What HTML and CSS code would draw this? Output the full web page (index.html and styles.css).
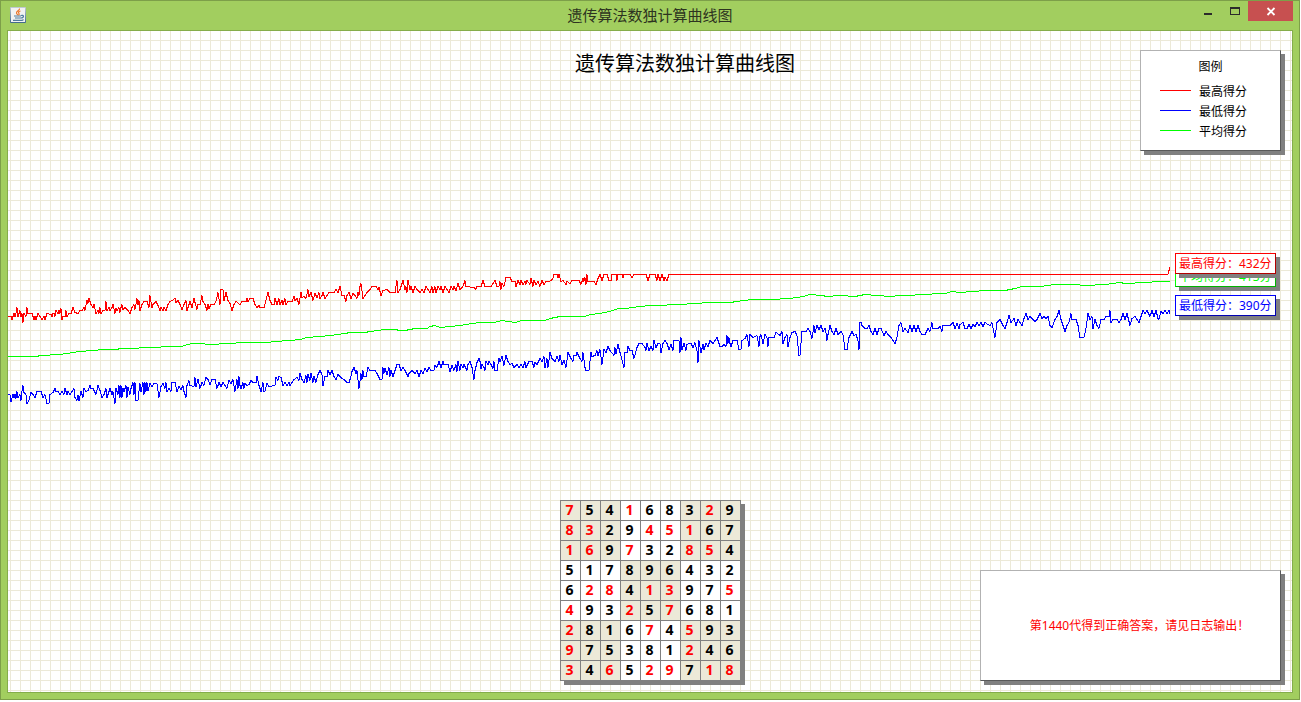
FILE: index.html
```html
<!DOCTYPE html>
<html lang="zh-CN">
<head>
<meta charset="utf-8">
<title>遗传算法数独计算曲线图</title>
<link rel="stylesheet" href="styles.css">
</head>
<body>
<div class="window">
  <header class="titlebar">
    <svg class="app-icon" viewBox="0 0 16 16" aria-hidden="true">
      <defs><linearGradient id="tile" x1="0" y1="0" x2="0" y2="1"><stop offset="0" stop-color="#c3ccd6"/><stop offset="1" stop-color="#3f688b"/></linearGradient></defs>
      <rect width="16" height="16" rx="1" fill="url(#tile)"/>
      <rect x="1" y="1" width="14" height="14" fill="#f2f2f1"/>
      <path d="M9.5 1.5C10 3.500 6 4 6.500 6C6.700 7 7.500 7.200 7.800 8.200M10.500 4C8.500 4.500 8 5.500 9 6.500C9.500 7.200 9 7.800 8.500 8.200" fill="none" stroke="#ec7427" stroke-width="1.200"/>
      <path d="M4 9H11M5 11H11M11 8.500C14 7.500 14.500 10.500 11 11M3 13.300H12.500M12.500 13.200L13.500 12.500" fill="none" stroke="#4f7c9d" stroke-width="1.200"/>
    </svg>
    <h1 class="window-title">遗传算法数独计算曲线图</h1>
    <div class="controls">
      <button class="control" type="button" aria-label="最小化"><svg class="glyph" viewBox="0 0 10 10"><path d="M1 7H9V9H1Z" fill="#2b2b2b"/></svg></button>
      <button class="control" type="button" aria-label="最大化"><svg class="glyph" viewBox="0 0 10 10"><path d="M0 1H10V9H0ZM1 3V8H9V3Z" fill="#2b2b2b" fill-rule="evenodd"/></svg></button>
      <button class="control control-close" type="button" aria-label="关闭"><svg class="glyph" viewBox="0 0 10 10"><path d="M1.500 2L8.500 9M8.500 2L1.500 9" stroke="#fff" stroke-width="1.800"/></svg></button>
    </div>
  </header>
  <main class="chart">
    <svg class="curves" viewBox="8 30.500 1284 661" preserveAspectRatio="none" role="img" aria-label="得分曲线">
      <polyline class="curve low" points="8,394 10,394 11,401 13,394 14,397 15,394 16,398 17,391 18,397 20,394 21,400 22,391 23,385 24,392 26,394 27,403 29,400 31,392 33,394 35,397 37,391 41,391 43,397 45,394 47,403 49,403 50,394 53,392 55,388 56,391 58,391 60,394 62,391 64,394 65,388 67,394 68,391 70,394 72,391 74,388 75,397 77,400 78,395 79,400 81,391 83,397 84,388 86,391 88,390 90,385 91,388 93,388 96,394 98,385 100,390 102,397 104,394 106,388 107,397 109,391 110,388 112,394 113,391 115,403 116,388 118,394 119,385 120,397 121,385 122,397 123,388 124,391 126,385 127,397 128,387 130,394 131,388 133,382 134,394 135,382 136,400 138,400 139,391 140,383 141,391 143,382 144,394 145,382 146,391 147,382 148,390 150,383 152,386 154,383 157,383 159,397 161,386 163,383 165,388 166,382 167,391 169,388 171,391 172,382 175,382 177,391 179,386 181,389 183,385 184,391 186,397 187,385 189,380 190,385 194,386 195,377 196,386 198,379 200,388 202,382 204,385 206,377 208,379 210,384 212,379 215,379 217,388 219,382 221,386 223,382 225,385 227,388 229,380 231,383 233,379 235,391 237,379 238,388 239,376 240,385
241,388 243,382 244,388 245,383 247,385 249,384 251,380 253,382 256,382 257,376 259,385 261,391 263,382 264,391 265,391 267,383 269,386 275,385 276,377 278,380 279,376 281,377 283,385 285,382 287,385 289,382 290,385 292,382 294,379 297,377 299,380 300,373 302,379 304,382 306,375 307,382 308,374 310,380 311,373 313,382 314,376 316,382 318,374 320,370 322,374 323,385 325,376 327,376 328,370 330,374 332,370 334,376 336,379 338,374 341,377 345,380 347,382 349,382 351,376 352,371 354,367 356,373 357,370 359,388 361,373 362,379 363,370 364,376 366,376 368,367 370,370 375,370 377,373 380,379 382,379 383,367 384,373 385,368 387,374 389,367 390,376 391,370 393,376 395,370 397,364 399,364 401,370 403,367 405,370 408,376 409,373 412,370 415,373 417,370 419,376 421,370 423,373 425,368 427,371 429,367 431,370 434,370 435,365 437,367 439,361 441,367 443,361 444,364 448,364 450,371 452,365 454,370 456,364 457,371 458,361 460,370 461,364 463,367 464,364 467,370 468,364 470,361 472,367 474,379 475,370 477,362 479,358
480,361 481,368 482,364 484,367 485,370 486,361 488,364 489,361 491,364 493,368 494,361 495,370 497,370 499,358 500,361 502,356 504,365 506,355 508,361 510,364 512,363 514,367 517,364 519,367 521,364 523,367 525,361 526,367 529,361 532,361 534,367 535,362 537,364 540,358 542,361 544,356 545,367 547,358 548,367 550,352 552,358 555,361 557,356 559,361 560,355 562,364 564,360 566,367 568,352 571,358 573,361 574,355 576,355 577,352 580,358 582,361 583,352 585,367 586,370 589,370 591,352 592,356 595,355 597,350 598,355 600,349 602,364 604,349 606,352 608,346 610,350 614,355 615,347 616,353 618,344 620,352 624,367 625,352 627,352 628,346 630,350 632,350 634,358 637,347 639,343 642,343 645,347 646,350 647,343 649,350 651,346 653,350 654,340 656,347 658,343 660,343 661,352 663,343 665,340 667,343 669,349 671,344 673,350 674,340 679,340 680,352 681,337 682,349 684,343 686,350 687,344 689,343 691,343 693,347 695,342 697,350 698,362 699,340 701,352 703,344 704,349 706,343 708,346 710,340 713,343 715,340 717,337 719,343
720,346 722,346 724,344 726,346 727,335 728,343 729,337 730,343 731,346 733,340 737,340 739,349 741,349 742,340 745,338 747,334 749,346 750,334 753,337 757,335 759,346 760,336 761,334 763,343 765,334 767,337 768,346 769,337 774,337 776,332 780,335 782,331 783,343 785,337 787,334 788,346 790,337 792,332 795,331 797,335 799,355 800,355 801,343 802,331 806,331 808,328 810,331 812,338 814,325 815,332 817,325 819,329 821,325 823,331 825,328 826,332 827,340 828,334 830,325 832,331 834,334 836,328 838,334 841,331 843,334 845,349 847,349 849,337 852,331 854,335 856,334 858,340 859,349 860,322 861,322 862,325 865,328 867,328 869,325 871,331 873,334 875,328 877,334 879,328 881,328 884,335 886,331 888,334 891,337 893,340 895,343 897,337 899,325 901,322 903,331 905,328 908,332 910,325 912,331 914,325 916,331 918,325 920,331 922,334 925,334 928,328 930,331 932,322 933,328 938,328 940,326 942,331 943,325 950,325 953,322 955,328 957,323 959,328
960,324 963,322 965,328 967,328 969,324 971,328 973,324 975,326 977,322 979,325 981,322 983,326 985,322 988,324 990,325 992,322 995,337 997,322 1000,319 1003,325 1005,328 1007,322 1009,315 1011,322 1014,318 1016,325 1018,319 1020,322 1022,325 1024,318 1026,313 1028,319 1030,316 1032,318 1035,321 1037,319 1040,313 1042,318 1044,316 1046,318 1048,316 1050,325 1052,327 1055,319 1057,316 1059,310 1061,319 1063,325 1065,331 1067,325 1069,322 1071,313 1072,319 1076,319 1078,325 1080,337 1084,337 1086,328 1088,313 1090,319 1092,316 1093,328 1095,319 1097,325 1099,328 1101,319 1104,319 1106,316 1109,316 1110,310 1111,322 1113,319 1117,319 1119,322 1121,319 1123,313 1125,319 1127,313 1129,321 1130,325 1132,318 1135,316 1137,319 1139,322 1141,316 1143,310 1145,313 1147,310 1150,316 1152,310 1154,316 1156,310 1158,318 1159,319 1161,311 1163,313 1165,310 1167,313 1169,310 1170,313"/>
      <polyline class="curve mean" points="8,356 37,356 40,355 60,354 67,353 73,352 80,351 93,350 103,349 117,349 120,348 135,348 143,347 160,347 162,346 182,346 187,344 193,343 203,343 207,344 218,344 220,343 233,343 240,342 268,342 275,341 290,340 300,339 307,337 320,336 330,335 345,333 350,332 365,332 370,331 385,329 395,329 400,330 405,330 410,329 415,328 427,328 430,326 435,325 440,327 460,325 466,324 480,322 494,322 502,320 508,321 515,322 522,320 545,320 550,318 560,316 585,316 590,314 600,313 610,311 618,308 625,308 640,306 650,305 662,305 672,304 680,304 695,303 710,302 732,302 735,301 745,300 752,299 770,299 790,298 803,296 810,294 822,295 827,296 840,295 855,296 865,294 890,296 900,295 930,294 935,293 945,293 952,291 960,292 985,290 1005,290 1015,288 1022,286 1040,286 1055,284 1075,284 1085,285 1105,284 1120,282 1125,283 1145,282 1160,281 1170,281"/>
      <polyline class="curve high" points="8,316 11,316 12,319 14,313 15,316 16,313 17,307 18,316 20,310 21,316 22,313 23,322 24,313 26,316 27,307 28,313 32,313 34,319 35,316 36,319 38,313 40,316 42,319 44,316 45,319 47,313 51,314 52,316 53,313 54,313 55,316 56,310 58,313 59,310 60,313 61,308 62,319 63,316 65,316 66,310 67,316 69,313 71,313 73,307 75,312 78,313 80,310 82,310 84,307 85,310 87,300 88,303 89,298 91,304 93,307 94,304 96,313 98,310 99,313 100,307 101,313 103,310 105,310 106,301 107,310 109,307 110,310 112,307 113,304 115,313 116,308 117,310 119,307 120,312 121,307 122,304 123,309 125,307 128,310 130,313 132,307 134,304 135,309 137,298 138,304 139,300 140,310 142,304 144,301 147,301 148,304 149,307 150,295 152,307 153,304 156,301 158,305 160,310 161,307 163,310 164,307 166,310 168,304 170,301 172,300 175,298 176,302 178,300 180,304 182,309 184,304 186,300 187,310 188,307 190,301 192,307 194,298 195,302 197,309 198,304 200,304 202,295 203,301 205,304 207,310 208,304 209,308 211,304 214,304 216,301 218,292 219,298 220,304 221,289 223,289 224,300 226,292 228,300 230,303 232,310 234,304 236,301 240,304
242,301 246,301 247,298 248,301 250,298 253,298 255,304 257,307 259,305 260,307 264,307 266,300 268,292 270,300 272,304 274,304 275,298 277,304 279,298 280,304 282,300 283,304 285,298 286,304 288,301 292,301 294,296 295,300 297,298 299,304 301,292 302,297 304,296 306,298 308,289 309,296 311,292 313,300 315,293 317,297 319,292 320,298 322,295 323,292 325,298 327,295 329,292 334,292 336,289 338,292 340,286 342,295 344,295 346,301 347,295 349,292 351,298 353,293 355,295 357,298 358,292 359,295 360,286 361,283 363,298 365,295 367,292 370,289 372,286 376,286 378,289 379,287 381,295 383,290 387,289 390,292 395,292 397,280 398,292 400,289 402,283 403,280 405,289 406,286 407,292 408,280 410,289 411,286 413,292 415,286 417,289 420,292 422,289 424,292 426,286 428,289 430,292 432,286 433,292 435,286 436,292 438,286 440,289 441,286 443,292 445,286 447,289 449,292 451,286 453,289 454,286 456,290 458,283 460,289 463,286 465,280 466,286 474,287 476,289 477,286 480,286
481,286 483,280 485,286 491,286 493,283 495,280 497,286 499,286 500,281 501,289 502,283 504,286 506,277 510,277 512,281 515,281 516,286 518,280 520,284 521,280 523,284 525,281 526,284 527,280 530,284 531,278 533,286 534,280 536,284 538,281 540,286 542,280 544,284 546,281 549,281 551,280 553,278 554,274 557,274 558,277 559,274 561,281 563,280 566,284 567,281 570,283 572,280 579,280 581,284 583,278 584,281 585,277 586,284 587,274 588,281 594,281 596,284 598,278 600,274 602,280 604,274 607,274 609,280 611,280 612,274 616,274 617,280 618,274 622,274 623,277 624,274 630,274 632,277 634,274 646,274 648,280 650,274 655,274 657,280 658,274 660,280 662,274 664,280 665,277 667,280 669,274 1168,274 1169,270 1170,267"/>
    </svg>
    <h2 class="chart-title">遗传算法数独计算曲线图</h2>

    <section class="panel legend">
      <h3 class="legend-title">图例</h3>
      <ul class="legend-list">
        <li class="legend-item"><span class="swatch swatch-high"></span>最高得分</li>
        <li class="legend-item"><span class="swatch swatch-low"></span>最低得分</li>
        <li class="legend-item"><span class="swatch swatch-mean"></span>平均得分</li>
      </ul>
    </section>

    <div class="tag tag-mean">平均得分：413分</div>
    <div class="tag tag-high">最高得分：432分</div>
    <div class="tag tag-low">最低得分：390分</div>

    <table class="sudoku" aria-label="数独">
      <colgroup span="3"></colgroup><colgroup span="3"></colgroup><colgroup span="3"></colgroup>
      <tbody class="band">
        <tr><td class="given">7</td><td>5</td><td>4</td><td class="given">1</td><td>6</td><td>8</td><td>3</td><td class="given">2</td><td>9</td></tr>
        <tr><td class="given">8</td><td class="given">3</td><td>2</td><td>9</td><td class="given">4</td><td class="given">5</td><td class="given">1</td><td>6</td><td>7</td></tr>
        <tr><td class="given">1</td><td class="given">6</td><td>9</td><td class="given">7</td><td>3</td><td>2</td><td class="given">8</td><td class="given">5</td><td>4</td></tr>
      </tbody>
      <tbody class="band band-middle">
        <tr><td>5</td><td>1</td><td>7</td><td>8</td><td>9</td><td>6</td><td>4</td><td>3</td><td>2</td></tr>
        <tr><td>6</td><td class="given">2</td><td class="given">8</td><td>4</td><td class="given">1</td><td class="given">3</td><td>9</td><td>7</td><td class="given">5</td></tr>
        <tr><td class="given">4</td><td>9</td><td>3</td><td class="given">2</td><td>5</td><td class="given">7</td><td>6</td><td>8</td><td>1</td></tr>
      </tbody>
      <tbody class="band">
        <tr><td class="given">2</td><td>8</td><td>1</td><td>6</td><td class="given">7</td><td>4</td><td class="given">5</td><td>9</td><td>3</td></tr>
        <tr><td class="given">9</td><td>7</td><td>5</td><td>3</td><td>8</td><td>1</td><td class="given">2</td><td>4</td><td>6</td></tr>
        <tr><td class="given">3</td><td>4</td><td class="given">6</td><td>5</td><td class="given">2</td><td class="given">9</td><td>7</td><td class="given">1</td><td class="given">8</td></tr>
      </tbody>
    </table>

    <section class="panel message">第1440代得到正确答案，请见日志输出！</section>
  </main>
</div>
</body>
</html>
```

FILE: styles.css
```css
* { box-sizing: border-box; }

body {
  margin: 0;
  background: #fff;
  color: #000;
  font: 12px/20px "Noto Sans", "Noto Sans CJK SC", sans-serif;
}

h1, h2, h3, ul { margin: 0; padding: 0; font-weight: 400; }

.window {
  display: flex;
  flex-direction: column;
  min-height: calc(100vh - 2px);
  margin: 0 1px 2px 0;
  padding: 0 6px 6px;
  border: 1px solid #7d9f49;
  background: #a2ce5f;
}

.titlebar {
  display: grid;
  grid-template-columns: 1fr auto 1fr;
  height: 29px;
}

.app-icon { width: 16px; height: 16px; margin: 6px 0 0 3px; }

.window-title {
  color: #2d3320;
  font-size: 15px;
  line-height: 28px;
}

.controls { display: flex; justify-content: flex-end; align-items: flex-start; }

.control {
  display: flex;
  align-items: center;
  justify-content: center;
  width: 27px;
  height: 20px;
  padding: 0;
  border: 0;
  background: none;
}

.control-close { width: 45px; background: #c75050; }
.glyph { width: 10px; height: 10px; }

.chart {
  position: relative;
  flex: 1;
  outline: 1px solid #85ad4b;
  margin: 1px;
  background-color: #fff;
  background-image:
    linear-gradient(to right, #ece9d8 1px, transparent 1px),
    linear-gradient(to bottom, #ece9d8 1px, transparent 1px);
  background-size: 10px 10px;
  background-position: 2px 0, 0 9px;
}

.curves { position: absolute; inset: 0; width: 100%; height: 100%; }

.curve {
  fill: none;
  stroke-width: 1;
  vector-effect: non-scaling-stroke;
  shape-rendering: crispEdges;
}
.high { stroke: #f00; }
.low { stroke: #00f; }
.mean { stroke: #0f0; }

.chart-title {
  position: relative;
  padding: 17px 0 0 70px;
  font-size: 20px;
  line-height: 32px;
  text-align: center;
}

.panel {
  position: absolute;
  right: 11px;
  border: 1px solid;
  border-color: #b2b2b2 #595959 #595959 #b2b2b2;
  background: #fff;
  box-shadow: 4px 4px 0 #808080;
}

.legend { top: 19px; width: 141px; padding: 6px 0 8px; }
.legend-title { font-size: 12px; line-height: 20px; text-align: center; }
.legend-list { padding: 5px 0 0 19px; list-style: none; }
.legend-item { display: flex; gap: 8px; }
.swatch { width: 31px; height: 1px; margin-top: 8px; }
.swatch-high { background: #f00; }
.swatch-low { background: #00f; }
.swatch-mean { background: #0f0; }

.tag {
  position: absolute;
  right: 16px;
  width: 101px;
  padding: 0 3px;
  border: 1px solid;
  background: #fff;
  box-shadow: 4px 4px 0 #808080;
  line-height: 19px;
  white-space: nowrap;
}
.tag-mean { top: 235px; color: #0f0; border-color: #0f0 #00b200 #00b200 #0f0; }
.tag-high { top: 222px; color: #f00; border-color: #f00 #b20000 #b20000 #f00; }
.tag-low { top: 264px; color: #00f; border-color: #00f #0000b2 #0000b2 #00f; }

.sudoku {
  position: absolute;
  bottom: 11px;
  left: calc(50% - 90px);
  border-collapse: collapse;
  background: #fff;
  box-shadow: 4px 4px 0 #808080;
}

.sudoku td {
  width: 20px;
  height: 20px;
  padding: 0 2px 2px 0;
  border: 1px solid #808080;
  font-size: 14px;
  font-weight: 700;
  line-height: 17px;
  text-align: center;
}

.band td:nth-child(-n+3),
.band td:nth-child(n+7),
.band-middle td:nth-child(n+4):nth-child(-n+6) { background: #ece9d8; }
.band-middle td:nth-child(-n+3),
.band-middle td:nth-child(n+7) { background: #fff; }
.sudoku .given { color: #f00; }

.message {
  bottom: 11px;
  width: 301px;
  padding: 45px 0 44px 18px;
  color: #f00;
  text-align: center;
}
```
